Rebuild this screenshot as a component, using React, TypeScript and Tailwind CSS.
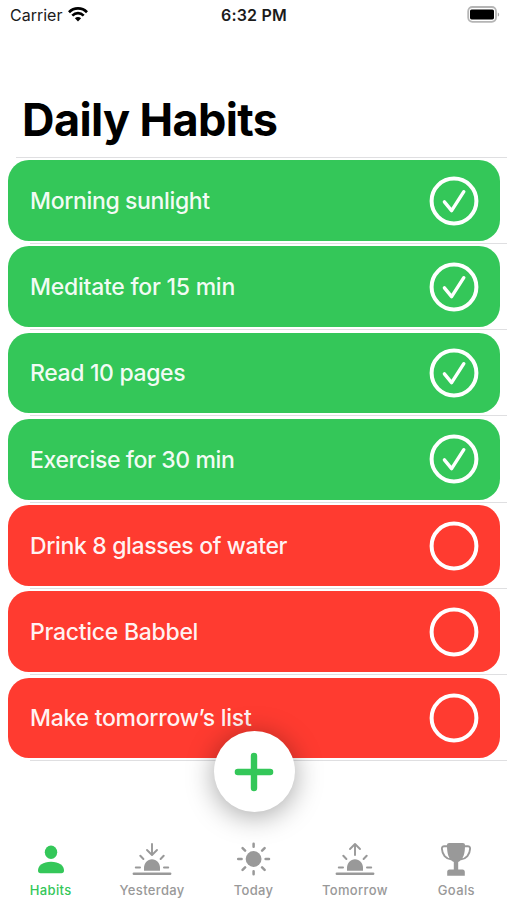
import React from 'react';

const habits = [
  { title: 'Morning sunlight', done: true, spacing: 'tracking-[-0.36px]' },
  { title: 'Meditate for 15 min', done: true, spacing: 'tracking-[-0.25px]' },
  { title: 'Read 10 pages', done: true, spacing: 'tracking-[-0.36px]' },
  { title: 'Exercise for 30 min', done: true, spacing: 'tracking-[-0.39px]' },
  { title: 'Drink 8 glasses of water', done: false, spacing: 'tracking-[-0.36px]' },
  { title: 'Practice Babbel', done: false, spacing: 'tracking-[-0.28px]' },
  { title: 'Make tomorrow’s list', done: false, spacing: 'tracking-[-0.28px]' },
];

const tabs = [
  { label: 'Habits', icon: <PersonIcon />, active: true },
  { label: 'Yesterday', icon: <HorizonIcon arrow="M20 2V12M15 8L20 13L25 8" />, active: false },
  { label: 'Today', icon: <SunIcon />, active: false },
  { label: 'Tomorrow', icon: <HorizonIcon arrow="M20 13V2.5M15 7L20 2L25 7" />, active: false },
  { label: 'Goals', icon: <TrophyIcon />, active: false },
];

function PersonIcon() {
  return (
    <svg width="40" height="36" viewBox="0 0 40 36" fill="currentColor">
      <ellipse cx="20" cy="10.3" rx="6.2" ry="6.8" />
      <path d="M7 28.5C7 23.4 12 19.7 20 19.7S33 23.4 33 28.5C33 30.2 32.1 31.3 30.4 31.3H9.6C7.9 31.3 7 30.2 7 28.5Z" />
    </svg>
  );
}

function HorizonIcon({ arrow }: { arrow: string }) {
  return (
    <svg width="40" height="36" viewBox="0 0 40 36" fill="none" stroke="currentColor" strokeLinecap="round" strokeLinejoin="round">
      <path d={arrow} strokeWidth="1.9" />
      <path d="M3.8 25.5H8M32 25.5H36.2M8.3 13.8L11.4 17M31.7 13.8L28.6 17" strokeWidth="2" />
      <path d="M12 28.8V25.8C12 20.9 15.6 17.2 20 17.2S28 20.9 28 25.8V28.8Z" fill="currentColor" stroke="none" />
      <path d="M1.8 31.8H38.2" strokeWidth="2.4" />
    </svg>
  );
}

function SunIcon() {
  return (
    <svg width="40" height="36" viewBox="0 0 40 36" fill="none" stroke="currentColor" strokeLinecap="round">
      <circle cx="19.6" cy="17" r="7.9" fill="currentColor" stroke="none" />
      <path d="M19.6 1.8V4.8M19.6 29.2V32.2M4.2 17H7.6M31.6 17H35M8.6 6.1L11.1 8.6M30.6 6.1L28.1 8.6M8.6 27.9L11.1 25.4M30.6 27.9L28.1 25.4" strokeWidth="2.5" />
    </svg>
  );
}

function TrophyIcon() {
  return (
    <svg width="40" height="36" viewBox="0 0 40 36" fill="none" stroke="currentColor">
      <path d="M12 4.2H8.3C6.6 4.2 5.8 5 5.9 6.8C6.2 12.6 9.8 16.8 15 17.3M28 4.2H31.7C33.4 4.2 34.2 5 34.1 6.8C33.8 12.6 30.2 16.8 25 17.3" strokeWidth="1.9" />
      <path d="M11 3.2C11 1.8 11.8 1 13.2 1H26.8C28.2 1 29 1.8 29 3.2C29 11.5 27.5 17.5 22.2 20V27.6H26.5C28 27.6 28.8 28.5 28.8 30V33.8H11.2V30C11.2 28.5 12 27.6 13.5 27.6H17.8V20C12.5 17.5 11 11.5 11 3.2Z" fill="currentColor" stroke="none" />
    </svg>
  );
}

function StatusBar() {
  return (
    <div className="grid h-[30px] grid-cols-3 items-center pr-[7px] pl-[10px] text-[#1b1b1b]">
      <div className="flex items-center gap-[6px]">
        <span className="text-[16px]">Carrier</span>
        <svg width="20" height="16" viewBox="0 0 20 16" fill="none" stroke="#000" strokeWidth="2.7">
          <path d="M1 5.2C6 0.2 14 0.2 19 5.2" />
          <path d="M4.3 8.6C7.6 5.4 12.4 5.4 15.7 8.6" />
          <path d="M10 14.4L6.9 11.3C8.6 9.6 11.4 9.6 13.1 11.3Z" fill="#000" stroke="none" />
        </svg>
      </div>
      <span className="-ml-[2px] text-center text-[16px] font-semibold tracking-[0.2px]">6:32 PM</span>
      <svg className="-mt-[2px] justify-self-end" width="33" height="17" viewBox="0 0 33 17">
        <rect x="1.2" y="1" width="27.8" height="14.8" rx="4.2" fill="#fff" stroke="#b5b5b5" strokeWidth="1.8" />
        <rect x="3" y="3.4" width="24" height="10" rx="1.6" fill="#000" />
        <path d="M30.8 6.4C32.6 7 32.6 10 30.8 10.6Z" fill="#aaa" />
      </svg>
    </div>
  );
}

function HabitCard({ title, done, spacing }: { title: string; done: boolean; spacing: string }) {
  return (
    <li className="h-[86.25px] pt-[2.2px]">
      <div className={`mr-[7px] ml-2 flex h-[80.7px] items-center justify-between rounded-[21px] pr-[21px] pl-[22px] ${done ? 'bg-[#34c759]' : 'bg-[#ff3b30]'}`}>
        <span className={`pt-px text-[23px] font-medium whitespace-nowrap text-white/95 ${spacing}`}>{title}</span>
        <svg width="50" height="50" viewBox="0 0 50 50" fill="none" stroke="#fff" strokeLinecap="round" strokeLinejoin="round">
          <circle cx="25" cy="25" r="22.4" strokeWidth="4" />
          {done && <path d="M15.4 25.8L22.6 34.6L34.8 15.7" strokeWidth="3.4" />}
        </svg>
      </div>
      <div className="mt-[2px] ml-[30px] h-px bg-[#dfdfe1]" />
    </li>
  );
}

export default function App() {
  return (
    <div className="relative flex h-[900px] w-[507px] flex-col overflow-hidden bg-white font-['Inter',sans-serif]">
      <StatusBar />
      <h1 className="mt-[62px] ml-[22px] h-[65px] text-[45px] leading-[56px] font-bold tracking-[-0.62px] whitespace-nowrap text-black">
        Daily Habits
      </h1>
      <div className="ml-4 h-px shrink-0 bg-[#dfdfe1]" />
      <ul>
        {habits.map((habit) => (
          <HabitCard key={habit.title} {...habit} />
        ))}
      </ul>
      <button className="absolute top-[731px] left-[213.5px] flex size-[81px] items-center justify-center rounded-full bg-white text-[#34c759] shadow-[0_4px_28px_rgba(0,0,0,0.36)]">
        <svg width="44" height="44" viewBox="0 0 44 44" stroke="currentColor" strokeWidth="6.4" strokeLinecap="round">
          <path d="M22 5.9V38.1M5.9 22H38.1" />
        </svg>
      </button>
      <nav className="mt-auto flex h-[60px]">
        {tabs.map((tab) => (
          <div key={tab.label} className={`flex flex-1 flex-col items-center ${tab.active ? 'text-[#34c759]' : 'text-[#999]'}`}>
            <div className="mt-[2px] h-9">{tab.icon}</div>
            <span className="mt-1 text-[13px] leading-4 font-medium tracking-[0.35px]">{tab.label}</span>
          </div>
        ))}
      </nav>
    </div>
  );
}
